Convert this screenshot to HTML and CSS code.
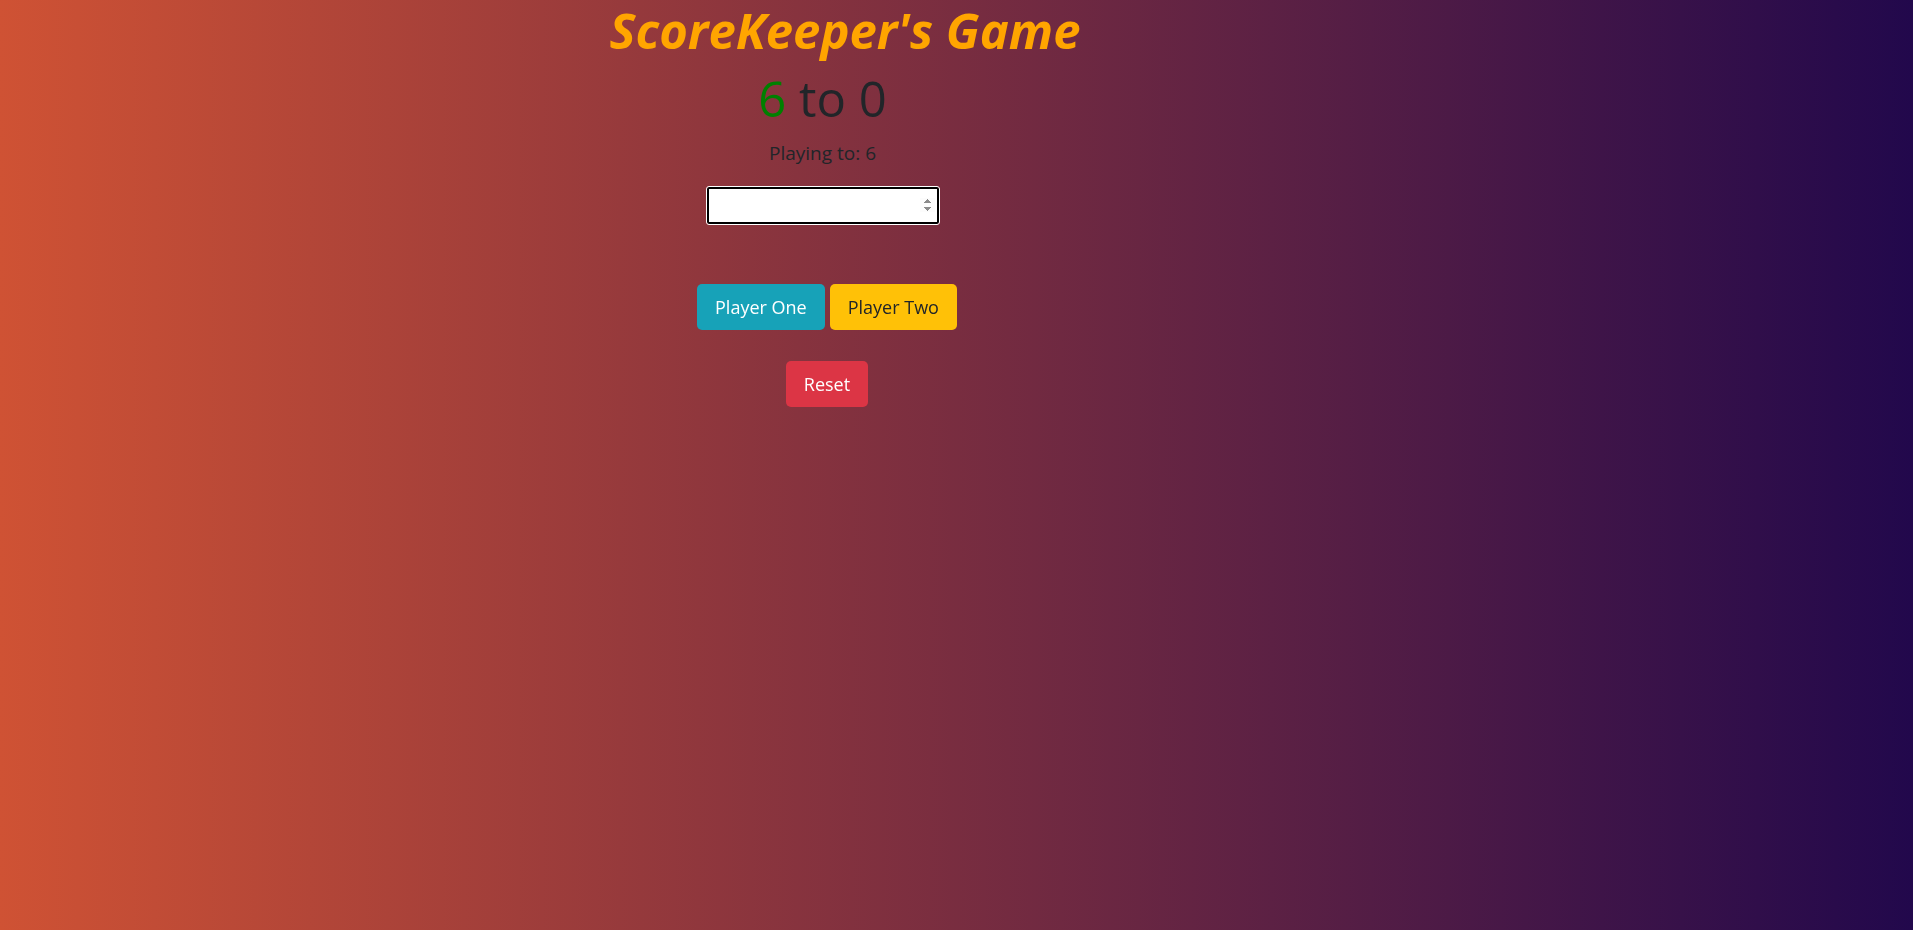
FILE: index.html
```html
<!DOCTYPE html>
<html lang="en">
<head>
<meta charset="utf-8">
<title>ScoreKeeper's Game</title>
<link rel="stylesheet" href="styles.css">
</head>
<body>
<main class="page">
  <h1 class="title">ScoreKeeper's Game</h1>
  <h2 class="score"><span class="p1">6</span> to <span class="p2">0</span></h2>
  <p class="playing">Playing to: <span>6</span></p>
  <div class="input-wrap"><input class="target" type="number" autofocus></div>
  <div class="players">
    <button class="btn btn-info">Player One</button>
    <button class="btn btn-warning">Player Two</button>
  </div>
  <div class="reset-row"><button class="btn btn-danger">Reset</button></div>
</main>
</body>
</html>
```
FILE: styles.css
```css
html, body {
  margin: 0;
  height: 100%;
}
body {
  background: linear-gradient(to right, #cf5234, #22084c);
  font-family: "Open Sans", "Noto Sans", sans-serif;
  color: #212529;
}
.page {
  width: 700px;
  margin-left: 477px;
  display: flex;
  flex-direction: column;
  align-items: center;
}
.title {
  margin: 0;
  padding: 0 4px 0 40px;
  font-size: 49px;
  line-height: 60px;
  font-weight: 700;
  font-style: italic;
  color: #ffa500;
}
.score {
  margin: 10px 9px 0 0;
  font-size: 49px;
  line-height: 56px;
  font-weight: 500;
}
.p1 { color: green; }
.playing {
  margin: 13px 9px 0 0;
  font-size: 19px;
  line-height: 28px;
}
.input-wrap {
  margin: 20px 8px 0 0;
}
.target {
  box-sizing: border-box;
  width: 232px;
  height: 37px;
  border: 2px solid #000;
  border-radius: 2px;
  outline: 1px solid #fff;
  background: #fff;
}
.players {
  margin-top: 60px;
  display: flex;
  gap: 5px;
}
.btn {
  font-family: inherit;
  font-size: 18px;
  line-height: 28px;
  padding: 8px 17px;
  border: 1px solid transparent;
  border-radius: 5px;
}
.btn-info { background: #17a2b8; color: #fff; }
.btn-warning { background: #ffc107; color: #212529; }
.btn-danger { background: #dc3545; color: #fff; }
.reset-row {
  margin-top: 31px;
}
```
